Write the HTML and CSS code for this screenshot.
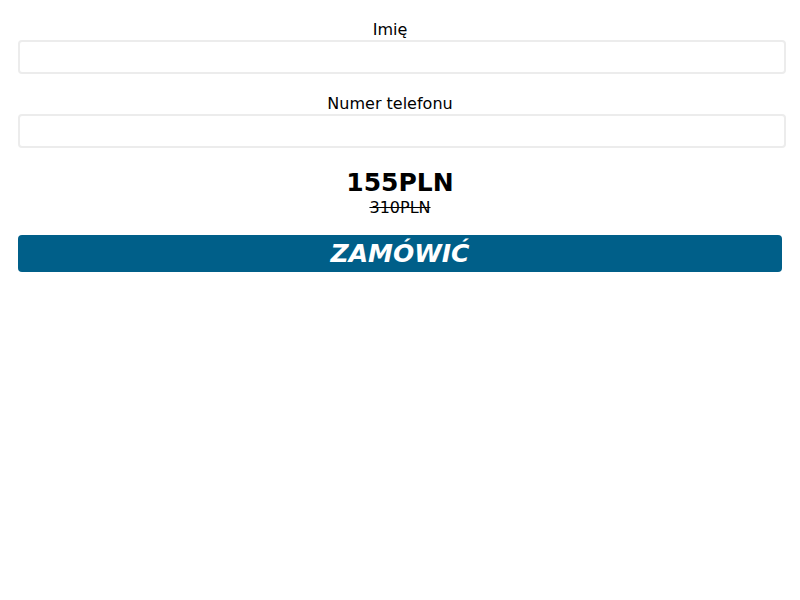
FILE: index.html
```html
<!DOCTYPE html>
<html>
<head>
<meta name="viewport" content="width=device-width, initial-scale=1">
<link rel="stylesheet" href="styles.css">
</head>
<body>

<form class="order-form" onsubmit="return false">
	<div class="field">
		<label for="name">Imię</label>
		<input type="text" id="name" name="name">
	</div>
	<div class="field">
		<label for="phone">Numer telefonu</label>
		<input type="tel" id="phone" name="phone">
	</div>

	<div class="price">
		<div class="price-new">155PLN</div>
		<div class="price-old">310PLN</div>
	</div>

	<button type="submit" class="order-btn">ZAMÓWIĆ</button>
</form>

</body>
</html>
```

FILE: styles.css
```css
body {
  margin: 0;
  font-family: "DejaVu Sans", sans-serif;
  color: #000;
  background: #fff;
}

* {
  box-sizing: border-box;
}

/* Form wrapper */
.order-form {
  padding: 20px 18px;
  width: 800px;
}

.field {
  margin-bottom: 20px;
  width: 768px;
}

.field label {
  display: block;
  text-align: center;
  font-size: 16px;
  line-height: 20px;
  padding-right: 24px;
}

.field input {
  display: block;
  width: 100%;
  height: 34px;
  margin: 0;
  border: 2px solid #ececec;
  border-radius: 4px;
  background: #fff;
  font-family: inherit;
  font-size: 16px;
  padding: 4px 8px;
  outline: none;
}

/* Price block */
.price {
  text-align: center;
  margin-bottom: 18px;
}

.price-new {
  font-size: 25px;
  font-weight: bold;
  line-height: 30px;
}

.price-old {
  font-size: 16px;
  line-height: 19px;
  text-decoration: line-through;
}

/* Order button */
.order-btn {
  display: block;
  width: 764px;
  height: 37px;
  margin: 0;
  padding: 0;
  border: none;
  border-radius: 4px;
  background: #005f89;
  color: #fff;
  font-family: inherit;
  font-size: 25px;
  font-weight: bold;
  font-style: italic;
  line-height: 37px;
  cursor: pointer;
}
```
